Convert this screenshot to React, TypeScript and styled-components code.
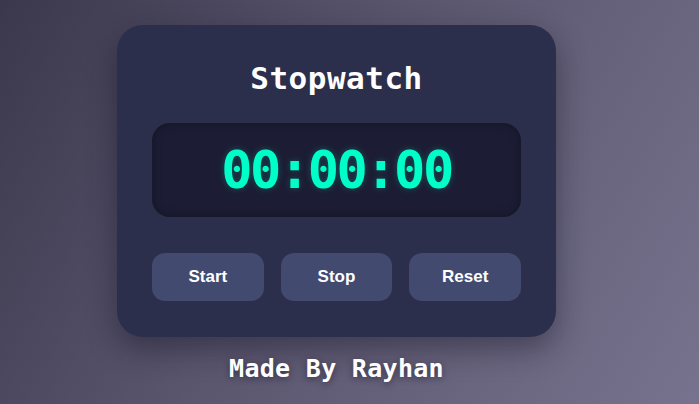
import React, { useEffect, useRef, useState } from 'react';
import styled, { createGlobalStyle } from 'styled-components';

const GlobalStyle = createGlobalStyle`
  html, body {
    margin: 0;
    padding: 0;
    height: 100%;
  }
  body {
    background: linear-gradient(120deg, #3b384d 0%, #5a566e 45%, #77738e 100%);
    font-family: 'DejaVu Sans Mono', monospace;
    overflow: hidden;
  }
`;

const Page = styled.main`
  min-height: 100vh;
  box-sizing: border-box;
  display: flex;
  flex-direction: column;
  align-items: center;
  justify-content: center;
  padding: 4px 26px 0 0;
`;

const Card = styled.section`
  width: 439px;
  box-sizing: border-box;
  padding: 34px 35px 36px;
  background: #2c2f4b;
  border-radius: 26px;
  box-shadow: 0 12px 30px rgba(20, 18, 35, 0.45);
  display: flex;
  flex-direction: column;
  align-items: stretch;
`;

const Title = styled.h1`
  margin: 0 0 26px;
  text-align: center;
  color: #ffffff;
  font-family: 'DejaVu Sans Mono', monospace;
  font-size: 31px;
  font-weight: bold;
  line-height: 38px;
  letter-spacing: 0.5px;
`;

const Display = styled.div`
  height: 94px;
  border-radius: 18px;
  background: #1c1d35;
  box-shadow: inset 0 0 10px rgba(0, 0, 0, 0.35);
  display: flex;
  align-items: center;
  justify-content: center;
`;

const Time = styled.span`
  color: #00ffc8;
  font-family: 'DejaVu Sans Mono', monospace;
  font-size: 52px;
  font-weight: bold;
  letter-spacing: -2.5px;
  text-shadow: 0 0 6px rgba(0, 255, 200, 0.25);
`;

const Controls = styled.div`
  margin-top: 36px;
  display: grid;
  grid-template-columns: repeat(3, 1fr);
  gap: 17px;
`;

const Button = styled.button`
  height: 48px;
  border: none;
  border-radius: 13px;
  background: #434a70;
  color: #ffffff;
  font-family: 'Liberation Sans', Arial, sans-serif;
  font-size: 17px;
  font-weight: bold;
  cursor: pointer;
`;

const Footer = styled.p`
  margin: 17px 0 0;
  color: #ffffff;
  font-family: 'DejaVu Sans Mono', monospace;
  font-size: 25px;
  font-weight: bold;
  line-height: 30px;
  letter-spacing: 0.3px;
  text-shadow: 0 2px 6px rgba(30, 25, 50, 0.6);
`;

const pad = (n: number) => String(n).padStart(2, '0');

export default function App() {
  const [elapsed, setElapsed] = useState(0);
  const [running, setRunning] = useState(false);
  const timer = useRef<number | null>(null);

  useEffect(() => {
    if (!running) return;
    timer.current = window.setInterval(() => setElapsed((e) => e + 1), 1000);
    return () => {
      if (timer.current) window.clearInterval(timer.current);
    };
  }, [running]);

  const h = Math.floor(elapsed / 3600);
  const m = Math.floor((elapsed % 3600) / 60);
  const s = elapsed % 60;

  return (
    <>
      <GlobalStyle />
      <Page>
        <Card>
          <Title>Stopwatch</Title>
          <Display>
            <Time>{`${pad(h)}:${pad(m)}:${pad(s)}`}</Time>
          </Display>
          <Controls>
            <Button onClick={() => setRunning(true)}>Start</Button>
            <Button onClick={() => setRunning(false)}>Stop</Button>
            <Button
              onClick={() => {
                setRunning(false);
                setElapsed(0);
              }}
            >
              Reset
            </Button>
          </Controls>
        </Card>
        <Footer>Made By Rayhan</Footer>
      </Page>
    </>
  );
}
